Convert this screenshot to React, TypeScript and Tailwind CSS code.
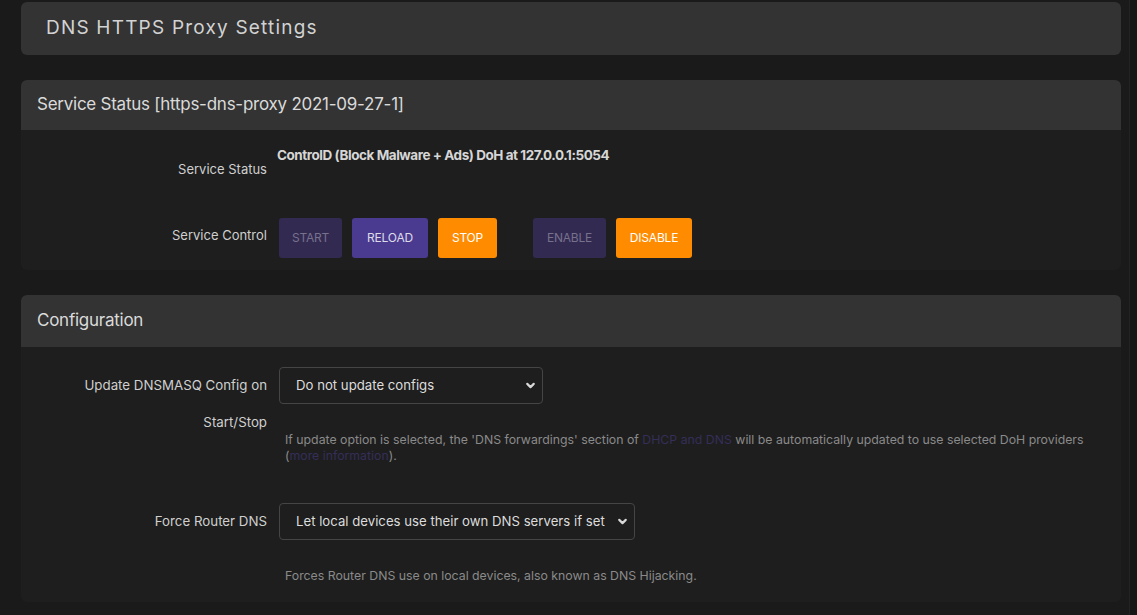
import { ChevronDown } from 'lucide-react';

const FONT = { fontFamily: 'Inter, "Noto Sans", sans-serif' };

function Button({ label, width, kind }: { label: string; width: string; kind: 'muted' | 'primary' | 'orange' }) {
  const styles: Record<string, string> = {
    muted: 'bg-[#332a52] text-[#76718c]',
    primary: 'bg-[#4b3b90] text-[#dedbe9]',
    orange: 'bg-[#ff8c00] text-white',
  };
  return (
    <div className={`h-[40px] ${width} ${styles[kind]} rounded-[3px] flex items-center justify-center text-[12px] tracking-[-0.2px]`}>
      {label}
    </div>
  );
}

function Select({ value, width }: { value: string; width: string }) {
  return (
    <div className={`h-[37px] ${width} border border-[#454545] rounded-[4px] flex items-center justify-between pl-[16px] pr-[5px] text-[13.2px] text-[#dcdcdc]`}>
      <span>{value}</span>
      <ChevronDown size={13} strokeWidth={4} className="text-[#d8d8d8]" />
    </div>
  );
}

export default function App() {
  return (
    <div className="w-full h-[615px] bg-[#1a1a1a] flex overflow-hidden" style={FONT}>
      <div className="flex-1 pl-[21px] pr-[8px] pt-[2px]">
        <div className="h-[53px] bg-[#333333] rounded-[6px] flex items-center pl-[25px] text-[19px] tracking-[1.2px] text-[#d2d2d2]">
          DNS HTTPS Proxy Settings
        </div>

        <div className="mt-[25px] rounded-[6px] overflow-hidden">
          <div className="h-[50px] bg-[#333333] flex items-center pl-[16px] text-[17px] tracking-[-0.25px] text-[#dadada]">
            Service Status [https-dns-proxy 2021-09-27-1]
          </div>
          <div className="bg-[#1e1e1e] pt-[15px] pb-[12px]">
            <div className="flex">
              <div className="w-[246px] text-right text-[13px] text-[#cfcfcf] leading-[20px] mt-[14px]">Service Status</div>
              <div className="ml-[10px] text-[13.5px] font-bold tracking-[-0.45px] text-[#d6d6d6] leading-[20px]">
                ControlD (Block Malware + Ads) DoH at 127.0.0.1:5054
              </div>
            </div>
            <div className="flex items-center mt-[39px]">
              <div className="w-[246px] text-right text-[13px] text-[#cfcfcf] -mt-[4px]">Service Control</div>
              <div className="ml-[12px] flex gap-[10px]">
                <Button label="START" width="w-[63px]" kind="muted" />
                <Button label="RELOAD" width="w-[76px]" kind="primary" />
                <Button label="STOP" width="w-[59px]" kind="orange" />
                <div className="w-[16px]" />
                <Button label="ENABLE" width="w-[73px]" kind="muted" />
                <Button label="DISABLE" width="w-[76px]" kind="orange" />
              </div>
            </div>
          </div>
        </div>

        <div className="mt-[25px] rounded-[6px] overflow-hidden">
          <div className="h-[52px] bg-[#333333] flex items-center pl-[16px] text-[17px] tracking-[-0.25px] text-[#dadada]">
            Configuration
          </div>
          <div className="bg-[#1e1e1e] pt-[20px] pb-[18px]">
            <div className="flex">
              <div className="w-[246px] text-right text-[13.3px] text-[#cfcfcf] leading-[37px]">
                <div>Update DNSMASQ Config on</div>
                <div>Start/Stop</div>
              </div>
              <div className="ml-[12px]">
                <Select value="Do not update configs" width="w-[264px]" />
                <div className="mt-[28px] ml-[6px] text-[12.3px] leading-[16px] text-[#8a8a8a]">
                  If update option is selected, the 'DNS forwardings' section of{' '}
                  <span className="text-[#342e58]">DHCP and DNS</span> will be automatically updated to use selected DoH providers
                  <br />
                  (<span className="text-[#342e58]">more information</span>).
                </div>
              </div>
            </div>
            <div className="flex mt-[39px]">
              <div className="w-[246px] text-right text-[13.3px] text-[#cfcfcf] leading-[37px]">Force Router DNS</div>
              <div className="ml-[12px]">
                <Select value="Let local devices use their own DNS servers if set" width="w-[356px]" />
                <div className="mt-[28px] ml-[6px] text-[12.3px] leading-[16px] text-[#8a8a8a]">
                  Forces Router DNS use on local devices, also known as DNS Hijacking.
                </div>
              </div>
            </div>
          </div>
        </div>
      </div>
      <div className="w-[8px] bg-[#161616] border-l border-[#232323]" />
    </div>
  );
}
